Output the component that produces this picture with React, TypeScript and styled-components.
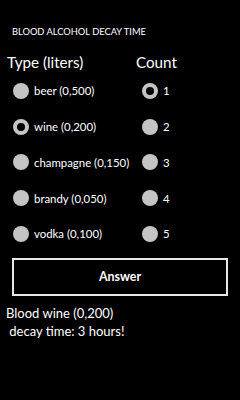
import React, { useState } from 'react'
import styled, { createGlobalStyle } from 'styled-components'

const GlobalStyle = createGlobalStyle`
  html, body {
    margin: 0;
    padding: 0;
    background: #000;
  }
  body {
    font-family: Lato, 'Noto Sans', sans-serif;
    color: #fff;
  }
`

const Page = styled.div`
  width: 240px;
  height: 400px;
  background: #000;
  display: flex;
  flex-direction: column;
`

const Title = styled.div`
  font-size: 9.3px;
  line-height: 12px;
  padding: 26px 0 0 12px;
`

const Columns = styled.div`
  display: grid;
  grid-template-columns: 129px 1fr;
  padding: 13px 0 0 7px;
`

const Column = styled.div`
  display: flex;
  flex-direction: column;
`

const Heading = styled.div`
  font-size: 15.2px;
  line-height: 22px;
  height: 22px;
  margin-bottom: 0;
`

const Option = styled.label`
  display: flex;
  align-items: center;
  gap: 5px;
  height: 35.75px;
  padding-left: 6px;
  font-size: 11.4px;
  white-space: nowrap;
  cursor: pointer;
`

const Dot = styled.span<{ $checked: boolean }>`
  width: 16px;
  height: 16px;
  box-sizing: border-box;
  border-radius: 50%;
  background: ${p => (p.$checked ? '#000' : '#c4c4c4')};
  border: ${p => (p.$checked ? '4.5px solid #c4c4c4' : 'none')};
  flex-shrink: 0;
`

const AnswerButton = styled.button`
  margin: 6px 12px 0 12px;
  height: 38px;
  background: #000;
  color: #fff;
  border: 2px solid #e8e8e8;
  font-family: inherit;
  font-size: 12.4px;
  font-weight: 700;
  cursor: pointer;
`

const Result = styled.div`
  padding: 8px 0 0 6px;
  font-size: 13px;
  line-height: 18px;
  white-space: pre;
`

const drinks = [
  { name: 'beer', volume: '0,500' },
  { name: 'wine', volume: '0,200' },
  { name: 'champagne', volume: '0,150' },
  { name: 'brandy', volume: '0,050' },
  { name: 'vodka', volume: '0,100' },
]

const counts = [1, 2, 3, 4, 5]

export default function App() {
  const [drink, setDrink] = useState(1)
  const [count, setCount] = useState(1)

  return (
    <Page>
      <GlobalStyle />
      <Title>BLOOD ALCOHOL DECAY TIME</Title>
      <Columns>
        <Column>
          <Heading>Type (liters)</Heading>
          {drinks.map((d, i) => (
            <Option key={d.name} onClick={() => setDrink(i)}>
              <Dot $checked={drink === i} />
              {d.name} ({d.volume})
            </Option>
          ))}
        </Column>
        <Column>
          <Heading>Count</Heading>
          {counts.map(c => (
            <Option key={c} onClick={() => setCount(c)}>
              <Dot $checked={count === c} />
              {c}
            </Option>
          ))}
        </Column>
      </Columns>
      <AnswerButton>Answer</AnswerButton>
      <Result>{'Blood wine (0,200)\n decay time: 3 hours!'}</Result>
    </Page>
  )
}
